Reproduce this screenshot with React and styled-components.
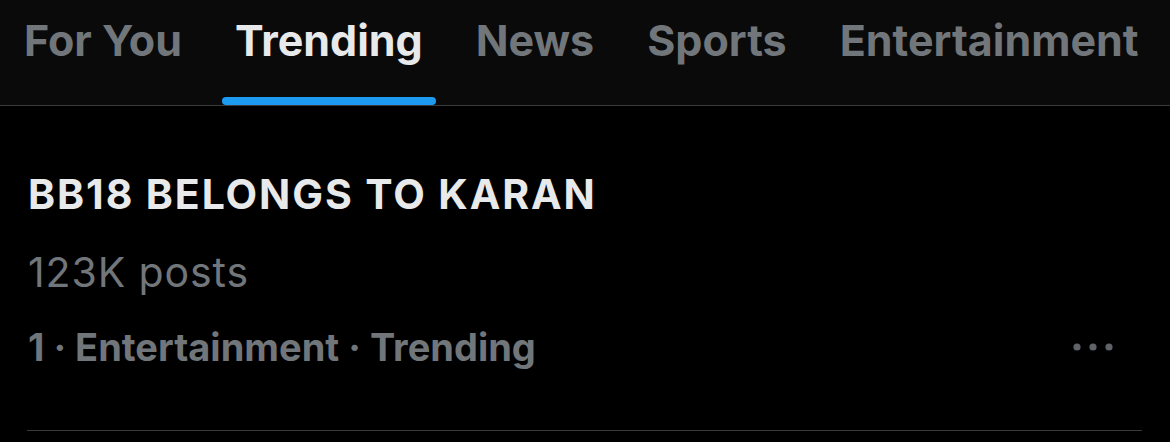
import React from "react";
import styled, { createGlobalStyle } from "styled-components";

const GlobalStyle = createGlobalStyle`
  html, body {
    margin: 0;
    padding: 0;
    background: #000;
  }
  body {
    font-family: Inter, "Liberation Sans", sans-serif;
    -webkit-font-smoothing: antialiased;
  }
`;

const Page = styled.div`
  width: 1170px;
  height: 442px;
  background: #000;
  overflow: hidden;
`;

const TabBar = styled.nav`
  display: flex;
  height: 106px;
  padding-left: 24px;
  gap: 53px;
  background: #0a0a0a;
  border-bottom: 1px solid #3a3a3c;
  box-sizing: border-box;
  overflow: hidden;
`;

const Tab = styled.div`
  display: flex;
  flex-direction: column;
  justify-content: space-between;
  align-items: stretch;
  height: 105px;
`;

const TabLabel = styled.span`
  padding-top: 14px;
  font-size: 43px;
  line-height: 52px;
  font-weight: 700;
  white-space: nowrap;
  color: ${(p) => (p.active ? "#e7e9ea" : "#71767b")};
`;

const Indicator = styled.div`
  height: 8px;
  margin: 0 -13px;
  border-radius: 4px;
  background: ${(p) => (p.active ? "#1d9bf0" : "transparent")};
`;

const Trend = styled.div`
  display: flex;
  justify-content: space-between;
  align-items: flex-end;
  padding: 64px 57px 0 28px;
`;

const TrendText = styled.div`
  display: flex;
  flex-direction: column;
`;

const Title = styled.div`
  font-size: 41px;
  line-height: 48px;
  font-weight: 700;
  letter-spacing: 1.9px;
  color: #e7e9ea;
  white-space: nowrap;
`;

const Posts = styled.div`
  margin-top: 30px;
  font-size: 41px;
  line-height: 48px;
  font-weight: 400;
  letter-spacing: 0.9px;
  color: #71767b;
`;

const Meta = styled.div`
  margin-top: 27px;
  font-size: 38px;
  line-height: 48px;
  font-weight: 700;
  color: #71767b;
  white-space: nowrap;
`;

const More = styled.svg`
  margin-bottom: 20px;
`;

const Divider = styled.div`
  margin: 59px 28px 0 27px;
  height: 1px;
  background: #3a3a3c;
`;

const tabs = ["For You", "Trending", "News", "Sports", "Entertainment"];

export default function App() {
  return (
    <Page>
      <GlobalStyle />
      <TabBar>
        {tabs.map((t) => (
          <Tab key={t}>
            <TabLabel active={t === "Trending"}>{t}</TabLabel>
            <Indicator active={t === "Trending"} />
          </Tab>
        ))}
      </TabBar>
      <Trend>
        <TrendText>
          <Title>BB18 BELONGS TO KARAN</Title>
          <Posts>123K posts</Posts>
          <Meta>1 · Entertainment · Trending</Meta>
        </TrendText>
        <More width="40" height="8" viewBox="0 0 40 8">
          <circle cx="4" cy="4" r="3.6" fill="#5f6368" />
          <circle cx="20" cy="4" r="3.6" fill="#5f6368" />
          <circle cx="36" cy="4" r="3.6" fill="#5f6368" />
        </More>
      </Trend>
      <Divider />
    </Page>
  );
}
